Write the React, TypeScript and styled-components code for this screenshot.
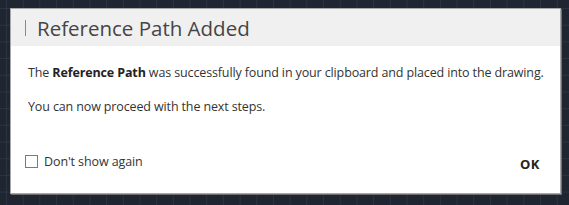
import styled, { createGlobalStyle } from "styled-components";
import { useState } from "react";

const GlobalStyle = createGlobalStyle`
  html, body {
    margin: 0;
    padding: 0;
  }
  body {
    font-family: "Open Sans", "Noto Sans", sans-serif;
  }
`;

export default function App() {
  const [dontShow, setDontShow] = useState(false);

  return (
    <>
      <GlobalStyle />
      <Canvas>
        <Dialog>
          <Header>
            <Divider />
            <Title>Reference Path Added</Title>
          </Header>
          <Body>
            <Text>
              The <strong>Reference Path</strong> was successfully found in
              your clipboard and placed into the drawing.
            </Text>
            <Text $spaced>You can now proceed with the next steps.</Text>
          </Body>
          <Footer>
            <CheckLabel>
              <CheckBox
                type="checkbox"
                checked={dontShow}
                onChange={(e) => setDontShow(e.target.checked)}
              />
              Don't show again
            </CheckLabel>
            <OkButton>OK</OkButton>
          </Footer>
        </Dialog>
      </Canvas>
    </>
  );
}

const Canvas = styled.div`
  width: 569px;
  height: 205px;
  box-sizing: border-box;
  padding: 8px 0 0 10px;
  background-color: #1f2531;
  background-image: linear-gradient(
      to right,
      rgba(120, 140, 170, 0.14) 1px,
      transparent 1px
    ),
    linear-gradient(to bottom, rgba(120, 140, 170, 0.14) 1px, transparent 1px);
  background-size: 16.7px 16.7px;
  background-position: 6px 8px;
  overflow: hidden;
`;

const Dialog = styled.div`
  width: 551px;
  height: 186px;
  box-sizing: border-box;
  background: #ffffff;
  border: 1px solid #a8a8a8;
  box-shadow: 1px 1px 0 #6e6e6e;
  display: flex;
  flex-direction: column;
`;

const Header = styled.div`
  height: 37px;
  background: #f0f0f0;
  display: flex;
  align-items: center;
  padding-left: 14px;
  gap: 11px;
`;

const Divider = styled.span`
  width: 1px;
  height: 16px;
  background: #8a8a8a;
`;

const Title = styled.h1`
  margin: 0;
  font-size: 20.5px;
  font-weight: 400;
  color: #454545;
  line-height: 1;
  padding-top: 1px;
`;

const Body = styled.div`
  padding: 17px 17px 0 17px;
`;

const Text = styled.p<{ $spaced?: boolean }>`
  margin: ${(p) => (p.$spaced ? "14px 0 0" : "0")};
  font-size: 12.5px;
  letter-spacing: -0.13px;
  line-height: 20px;
  white-space: nowrap;
  color: #333;

  strong {
    font-weight: 700;
    color: #222;
  }
`;

const Footer = styled.div`
  margin-top: auto;
  height: 50px;
  display: flex;
  align-items: center;
  justify-content: space-between;
  padding: 0 20px 4px 14px;
`;

const CheckLabel = styled.label`
  display: flex;
  align-items: center;
  gap: 6px;
  font-size: 12.5px;
  letter-spacing: -0.1px;
  color: #333;
  margin-top: -6px;
`;

const CheckBox = styled.input`
  appearance: none;
  margin: 0;
  width: 13px;
  height: 13px;
  border: 1px solid #7a7a7a;
  background: #fff;
  box-sizing: border-box;
`;

const OkButton = styled.button`
  border: 0;
  background: transparent;
  font-family: "Open Sans", sans-serif;
  font-weight: 700;
  font-size: 13px;
  letter-spacing: 0.5px;
  color: #222;
  padding: 0;
  cursor: pointer;
`;
